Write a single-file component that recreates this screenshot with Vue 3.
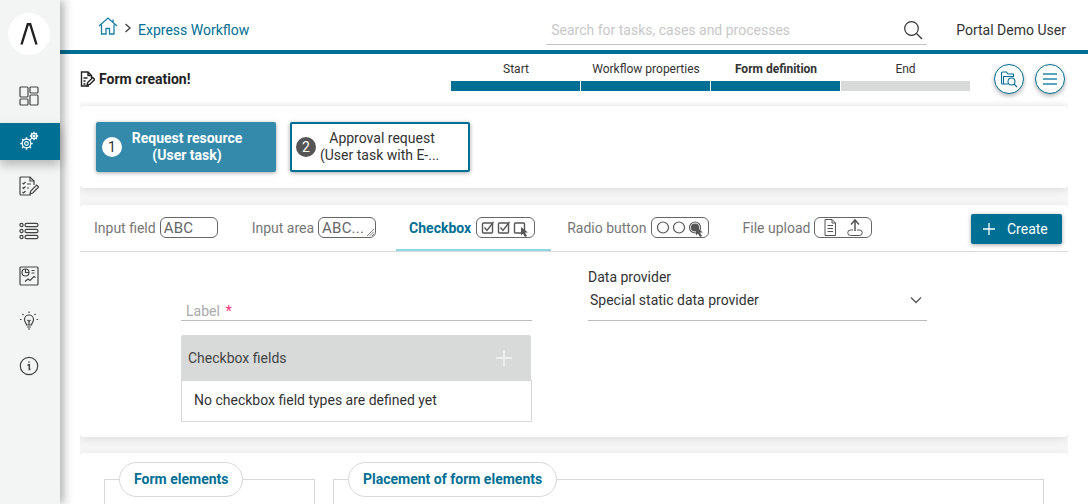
<script setup>
const navTop = [
  { id: 'dash', active: false },
  { id: 'gear', active: true },
  { id: 'tasks', active: false },
  { id: 'list', active: false },
  { id: 'chart', active: false },
  { id: 'bulb', active: false },
  { id: 'info', active: false }
]
const steps = [
  { label: 'Start', bold: false, done: true },
  { label: 'Workflow properties', bold: false, done: true },
  { label: 'Form definition', bold: true, done: true },
  { label: 'End', bold: false, done: false }
]
</script>

<template>
  <div class="app">
    <aside class="side">
      <div class="logo">
        <svg width="18" height="22" viewBox="0 0 18 22"><path d="M1.500 21.500 7.800 1.200h2.400l6.300 20.300" fill="none" stroke="#222" stroke-width="2.400"/></svg>
      </div>
      <nav class="nav">
        <div v-for="n in navTop" :key="n.id" class="nav-item" :class="{ on: n.active }">
          <svg width="20" height="20" viewBox="0 0 20 20" fill="none" stroke="currentColor" stroke-width="1.200">
            <template v-if="n.id === 'dash'">
              <rect x="1" y="1" width="8" height="10" rx="1"/><rect x="11" y="1" width="8" height="6" rx="1"/>
              <rect x="1" y="13" width="8" height="6" rx="1"/><rect x="11" y="9" width="8" height="10" rx="1"/>
            </template>
            <template v-else-if="n.id === 'gear'">
              <circle cx="7.500" cy="12.500" r="4.300"/><circle cx="7.500" cy="12.500" r="1.800"/>
              <path d="M7.500 6.300v2M7.500 16.700v2M1.300 12.500h2M11.700 12.500h2M3.100 8.100l1.400 1.400M10.500 15.500l1.400 1.400M3.100 16.900l1.400-1.400M10.500 9.500l1.400-1.400" stroke-width="1.500"/>
              <circle cx="15" cy="5" r="2.700"/><circle cx="15" cy="5" r=".9"/>
              <path d="M15 .8v1.500M15 7.700v1.500M10.800 5h1.500M17.700 5h1.500M12 2l1.100 1.100M16.900 6.900 18 8M12 8l1.100-1.100M16.900 3.100 18 2" stroke-width="1.300"/>
            </template>
            <template v-else-if="n.id === 'tasks'">
              <path d="M12 19H2a1 1 0 0 1-1-1V2a1 1 0 0 1 1-1h9l4 4v4"/><path d="M11 1v4h4"/>
              <path d="M3.500 7l1 1 2-2M3.500 11.500l1 1 2-2M3.500 16l1 1 2-2M8 8h4M8 12h2"/>
              <path d="M11 18l.7-3 6-6 2 2-6 6z"/>
            </template>
            <template v-else-if="n.id === 'list'">
              <circle cx="2.500" cy="4" r="1.600"/><rect x="6" y="2.400" width="13" height="3.200" rx="1.600"/>
              <circle cx="2.500" cy="10" r="1.600"/><rect x="6" y="8.400" width="13" height="3.200" rx="1.600"/>
              <circle cx="2.500" cy="16" r="1.600"/><rect x="6" y="14.400" width="13" height="3.200" rx="1.600"/>
            </template>
            <template v-else-if="n.id === 'chart'">
              <rect x="1" y="1" width="18" height="18" rx="1"/><circle cx="6.500" cy="6.500" r="3.500"/><path d="M6.500 3v3.500H10"/>
              <path d="M12.500 4.500h3M12.500 7h3M6 15.500l3-2.500 2 1.500 4-4 1.500 1"/>
            </template>
            <template v-else-if="n.id === 'bulb'">
              <path d="M7.500 14c0-2-2-2.500-2-5.500a4.500 4.500 0 0 1 9 0c0 3-2 3.500-2 5.500z"/><path d="M8 16h4M9 18h2M8.500 9l1.500 1.500L11.500 9M10 10.500V14"/>
              <path d="M10 .5v1.500M3.500 3l1 1M16.500 3l-1 1M1 8.500h1.500M17.500 8.500H19"/>
            </template>
            <template v-else>
              <circle cx="10" cy="10" r="8.700"/><path d="M8.500 9.200 10.300 8.800v4.700l1.200-.4" stroke-width="1.500"/><circle cx="10" cy="6" r=".8" fill="currentColor" stroke="none"/>
            </template>
          </svg>
        </div>
      </nav>
    </aside>

    <div class="main">
      <header class="top">
        <svg class="home" width="20" height="18" viewBox="0 0 20 18" fill="none" stroke="#1a7fa3" stroke-width="1.300">
          <path d="M1 9 10 1l9 8M3.500 7.500V17h4.500v-5.500h3.500V17h4.500V7.500M15 2.500V5"/>
        </svg>
        <svg class="chev" width="8" height="10" viewBox="0 0 8 10" fill="none" stroke="#444" stroke-width="1.400"><path d="M1.500 1 6 5 1.500 9"/></svg>
        <span class="crumb">Express Workflow</span>
        <div class="search">
          <span class="ph">Search for tasks, cases and processes</span>
          <svg width="20" height="20" viewBox="0 0 20 20" fill="none" stroke="#333" stroke-width="1.200"><circle cx="8.500" cy="8.500" r="6.800"/><path d="m13.500 13.500 5.500 5.500"/></svg>
        </div>
        <span class="user">Portal Demo User</span>
      </header>

      <div class="content">
        <div class="title-row">
          <svg class="title-icon" width="15" height="16" viewBox="0 0 15 16" fill="none" stroke="#222" stroke-width="1.400">
            <path d="M9 15H1.500V1H8l3.500 3.500V7M8 1v3.500h3.500M3.500 7h4M3.500 10h2M3.500 13h2"/><path d="M7 14.500l.7-3 5-5 2 2-5 5z"/>
          </svg>
          <span class="title">Form creation!</span>
          <div class="steps">
            <div v-for="s in steps" :key="s.label" class="step">
              <span class="step-label" :class="{ bold: s.bold }">{{ s.label }}</span>
              <span class="step-bar" :class="{ done: s.done }"></span>
            </div>
          </div>
          <button class="round">
            <svg width="18" height="18" viewBox="0 0 18 18" fill="none" stroke="#006f94" stroke-width="1.100">
              <path d="M8 14H2.500a1 1 0 0 1-1-1V3a1 1 0 0 1 1-1h4l1.500 2h5.500v3"/><path d="M3.500 14V6.500h10"/><circle cx="11.500" cy="11.500" r="3.500"/><path d="m14 14 3 3"/>
            </svg>
          </button>
          <button class="round menu">
            <svg width="18" height="14" viewBox="0 0 18 14" fill="none" stroke="#5da3bd" stroke-width="2"><path d="M2 2h14M2 7h14M2 12h14"/></svg>
          </button>
        </div>

        <div class="stack">
          <section class="card tasks">
            <div class="task active">
              <span class="num">1</span>
              <span class="task-text">Request resource<br>(User task)</span>
            </div>
            <div class="task">
              <span class="num">2</span>
              <span class="task-text">Approval request<span class="line2">(User task with E-...</span></span>
            </div>
          </section>

          <section class="card editor">
            <div class="tabbar">
              <div class="tab first"><span>Input field</span><span class="pill text">ABC</span></div>
              <div class="tab"><span>Input area</span><span class="pill text">ABC...
                <svg class="grip" width="8" height="8" viewBox="0 0 8 8" stroke="#666" stroke-width=".8"><path d="M1 8l7-7M3.500 8 8 3.500M6 8l2-2"/></svg></span></div>
              <div class="tab sel"><span>Checkbox</span><span class="pill">
                <svg width="55" height="19" viewBox="0 0 55 19" fill="none" stroke="#555" stroke-width="1.400">
                  <rect x="5.500" y="5" width="10" height="10" rx="1"/><path d="m7.500 9.500 2.500 3 6.500-8.500"/>
                  <rect x="21.500" y="5" width="10" height="10" rx="1"/><path d="m23.500 9.500 2.500 3 6.500-8.500"/>
                  <rect x="37.500" y="5" width="10" height="10" rx="1"/><path d="M44 9v8.500l2-2 2 3.500 2-1-2-3.500h3z" fill="#555" stroke="none"/>
                </svg></span></div>
              <div class="tab radio"><span>Radio button</span><span class="pill">
                <svg width="55" height="19" viewBox="0 0 55 19" fill="none" stroke="#555" stroke-width="1.200">
                  <circle cx="11" cy="9.500" r="5.500"/><circle cx="27" cy="9.500" r="5.500"/><circle cx="43" cy="9.500" r="5.500"/><circle cx="43" cy="9.500" r="3.500" fill="#555"/>
                  <path d="M44 9v8.500l2-2 2 3.500 2-1-2-3.500h3z" fill="#555" stroke="none"/>
                </svg></span></div>
              <div class="tab"><span>File upload</span><span class="pill">
                <svg width="55" height="19" viewBox="0 0 55 19" fill="none" stroke="#555" stroke-width="1">
                  <path d="M10 1.500h7l3.500 3.500v12.500H10zM17 1.500V5h3.500M12.500 7.500h5.500M12.500 10.500h5.500M12.500 13.500h5.500"/>
                  <path d="M40 13V3M36 6.500 40 2l4 4.500" stroke-width="1.500"/><path d="M38 12h-2.500a2 2 0 0 0 0 5.500h9a2 2 0 0 0 0-5.500H42"/>
                </svg></span></div>
              <button class="create">
                <svg width="14" height="14" viewBox="0 0 14 14" stroke="#fff" stroke-width="1.300"><path d="M7 1v12M1 7h12"/></svg>
                <span>Create</span>
              </button>
            </div>

            <div class="form">
              <div class="col-left">
                <div class="field-label"><span>Label</span><span class="req">*</span></div>
                <div class="panel-head">
                  <span>Checkbox fields</span>
                  <svg width="18" height="18" viewBox="0 0 18 18" stroke="#f4f5f5" stroke-width="1.500"><path d="M9 1v16M1 9h16"/></svg>
                </div>
                <div class="panel-body">No checkbox field types are defined yet</div>
              </div>
              <div class="col-right">
                <div class="dp-label">Data provider</div>
                <div class="dp-select">
                  <span>Special static data provider</span>
                  <svg width="12" height="8" viewBox="0 0 12 8" fill="none" stroke="#555" stroke-width="1.300"><path d="M1 1.500 6 6.500l5-5"/></svg>
                </div>
              </div>
            </div>
          </section>

          <section class="card lower">
            <div class="fset small"><span class="legend">Form elements</span></div>
            <div class="fset big"><span class="legend">Placement of form elements</span></div>
          </section>
        </div>
      </div>
    </div>
  </div>
</template>

<style>
html, body { margin: 0; overflow: hidden; }
</style>

<style scoped>
.app {
  display: flex;
  width: 1088px;
  height: 504px;
  overflow: hidden;
  font-family: Roboto, "Liberation Sans", sans-serif;
  font-size: 14px;
  color: #333;
  background: #fff;
}
.side {
  position: relative;
  z-index: 3;
  flex: 0 0 60px;
  background: #f3f5f5;
  box-shadow: 3px 0 10px rgba(0, 0, 0, .35);
}
.logo {
  width: 42px;
  height: 42px;
  margin: 13px 0 0 8px;
  border-radius: 50%;
  background: #fff;
  display: flex;
  align-items: center;
  justify-content: center;
}
.nav { margin-top: 23px; display: flex; flex-direction: column; gap: 8px; }
.nav-item {
  height: 36px;
  padding: 0 2px 1px 0;
  display: flex;
  align-items: center;
  justify-content: center;
  color: #444;
}
.nav-item.on { background: #006f94; color: #fff; box-shadow: 0 5px 10px rgba(0, 0, 0, .25); }
.main { flex: 1; min-width: 0; display: flex; flex-direction: column; }
.top {
  height: 42px;
  flex: none;
  padding-top: 8px;
  background: #fff;
  border-bottom: 4px solid #006f94;
  display: flex;
  align-items: center;
  padding-left: 38px;
}
.home { margin-top: -7px; }
.chev { margin: -2px 6px 0 6px; }
.crumb { color: #006f94; margin-top: 1px; }
.search {
  margin-left: 297px;
  width: 381px;
  height: 29px;
  margin-top: 3px;
  box-sizing: border-box;
  padding: 0 4px 0 5px;
  border-bottom: 1px solid #c4c4c4;
  display: flex;
  align-items: center;
  justify-content: space-between;
}
.ph { color: #c8c8c8; }
.user { margin-left: 29px; color: #333; margin-top: 1px; }
.content { padding: 0 20px; }
.title-row { height: 46px; display: flex; align-items: center; }
.title-icon { margin-top: 4px; }
.title { margin-left: 4px; font-size: 14px; font-weight: 700; color: #222; margin-top: 4px; }
.steps { display: flex; margin-left: 260px; align-self: flex-start; margin-top: 8px; }
.step { width: 130px; display: flex; flex-direction: column; align-items: center; }
.step:last-child { width: 129px; }
.step-label { font-size: 12px; line-height: 14px; color: #333; margin: 0 0 5px 1px; }
.step-label.bold { font-weight: 700; }
.step-bar { display: block; width: 100%; height: 10px; box-sizing: border-box; background: #d8dada; }
.step-bar.done { background: #006f94; border-right: 1px solid #fff; }
.round {
  flex: none;
  align-self: flex-start;
  width: 30px;
  height: 30px;
  padding: 0;
  margin-left: 24px;
  margin-top: 10px;
  border: 1px solid #006f94;
  border-radius: 50%;
  background: #fff;
  display: flex;
  align-items: center;
  justify-content: center;
  box-shadow: 0 2px 4px rgba(0, 0, 0, .3);
  position: relative;
  z-index: 1;
}
.round.menu { margin-left: 11px; }
.stack {
  overflow: hidden;
  padding-top: 6px;
  background: linear-gradient(#fff 0, #f6f6f6 6px);
}
.card {
  background: #fff;
  border-radius: 4px;
  box-shadow: 0 2px 10px rgba(0, 0, 0, .1);
}
.tasks { height: 82px; box-sizing: border-box; padding: 16px; display: flex; gap: 14px; }
.task {
  position: relative;
  width: 180px;
  height: 50px;
  box-sizing: border-box;
  border: 2px solid #006f94;
  border-radius: 2px;
  background: #fff;
  box-shadow: 0 1px 4px rgba(0, 0, 0, .35);
  display: flex;
  align-items: center;
  padding-left: 4px;
}
.task.active { background: #348aab; border-color: #348aab; color: #fff; font-weight: 700; }
.num {
  flex: none;
  width: 20px;
  height: 20px;
  border-radius: 50%;
  background: #555;
  color: #fff;
  font-size: 14px;
  font-weight: 400;
  display: flex;
  align-items: center;
  justify-content: center;
}
.task.active .num { background: #fff; color: #333; }
.task-text { width: 124px; margin-left: 4px; text-align: center; line-height: 17px; white-space: nowrap; }
.task.active .task-text { margin-left: 3px; }
.line2 { display: block; padding-right: 6px; }
.editor { margin-top: 17px; height: 232px; }
.tabbar {
  height: 46px;
  border-bottom: 1px solid #dcdcdc;
  display: flex;
  gap: 3px;
  padding-left: 1px;
  align-items: stretch;
}
.tab {
  padding: 1px 17px 0 13px;
  display: flex;
  align-items: center;
  gap: 4px;
  color: #777;
  border-bottom: 2px solid transparent;
  box-sizing: border-box;
}
.tab.first { padding-right: 18px; }
.tab.sel { border-bottom-color: #8fd6e4; color: #006f94; font-weight: 700; gap: 5px; padding-right: 16px; }
.tab.sel .pill { width: 59px; }
.tab.radio { padding-right: 18px; }
.pill {
  position: relative;
  width: 58px;
  height: 21px;
  box-sizing: border-box;
  border: 1px solid #666;
  border-radius: 6px;
  display: flex;
  align-items: center;
  font-weight: 400;
  flex: none;
}
.pill svg { display: block; }
.pill.text { color: #666; padding-left: 3px; font-size: 15px; letter-spacing: .2px; white-space: nowrap; }
.grip { position: absolute; right: 1px; bottom: 1px; }
.create {
  margin: 9px 6px 0 auto;
  width: 91px;
  height: 30px;
  padding: 0 0 0 11px;
  border: 0;
  border-radius: 2px;
  background: #006f94;
  color: #fff;
  font: 400 14px Roboto, sans-serif;
  display: flex;
  align-items: center;
  gap: 11px;
  box-shadow: 0 1px 4px rgba(0, 0, 0, .35);
}
.form { display: flex; padding-left: 101px; }
.col-left { width: 351px; margin-right: 56px; padding-top: 50px; }
.field-label {
  height: 19px;
  box-sizing: border-box;
  border-bottom: 1px solid #bdbdbd;
  padding-left: 5px;
  color: #aaa;
  font-size: 14px;
  line-height: 18px;
  display: flex;
  gap: 6px;
}
.req { color: #ff2d7a; }
.panel-head {
  margin-top: 14px;
  width: 350px;
  height: 45px;
  box-sizing: border-box;
  background: #d8dada;
  border-radius: 2px 2px 0 0;
  padding: 0 18px 0 7px;
  display: flex;
  align-items: center;
  justify-content: space-between;
  color: #444;
}
.panel-body {
  height: 42px;
  box-sizing: border-box;
  border: 1px solid #d8d8d8;
  padding: 0 0 2px 12px;
  display: flex;
  align-items: center;
  color: #333;
}
.col-right { width: 339px; padding-top: 17px; }
.dp-label { line-height: 16px; color: #333; }
.dp-select {
  margin-top: 2px;
  height: 34px;
  box-sizing: border-box;
  border-bottom: 1px solid #bdbdbd;
  padding: 0 5px 8px 2px;
  display: flex;
  align-items: center;
  justify-content: space-between;
}
.lower {
  margin-top: 16px;
  height: 120px;
  display: flex;
  padding: 26px 24px 0 24px;
  gap: 18px;
}
.fset { position: relative; height: 100px; box-sizing: border-box; border: 1px solid #d8d8d8; }
.fset.small { width: 211px; }
.fset.big { flex: 1; }
.legend {
  position: absolute;
  top: -18px;
  left: 14px;
  height: 35px;
  box-sizing: border-box;
  padding: 0 14px 2px;
  border: 1px solid #d8d8d8;
  border-radius: 18px;
  background: #fff;
  color: #006f94;
  font-weight: 700;
  display: flex;
  align-items: center;
  white-space: nowrap;
}
</style>
